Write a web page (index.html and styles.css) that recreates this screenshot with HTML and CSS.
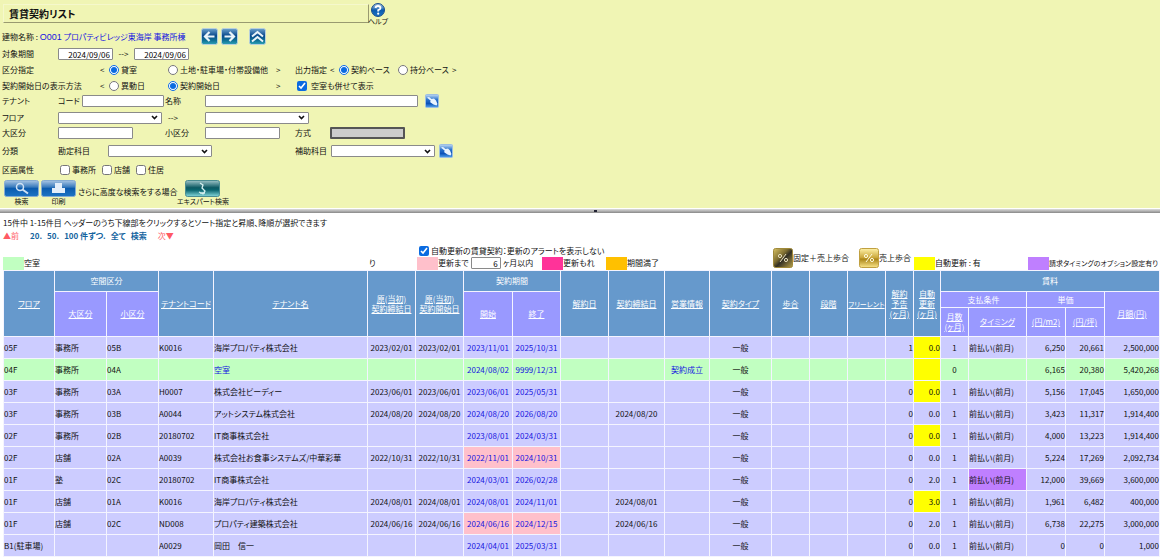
FILE: index.html
```html
<!DOCTYPE html>
<html lang="ja">
<head>
<meta charset="utf-8">
<title>賃貸契約リスト</title>
<link rel="stylesheet" href="styles.css">
</head>
<body>
<svg class="defs" width="0" height="0" aria-hidden="true">
  <defs>
    <linearGradient id="blue" x1="0" y1="0" x2="0" y2="1"><stop offset="0" stop-color="#a9c6e4"/><stop offset=".4" stop-color="#3b7cbd"/><stop offset=".5" stop-color="#0b5bae"/><stop offset="1" stop-color="#1d74c4"/></linearGradient>
    <linearGradient id="teal" x1="0" y1="0" x2="0" y2="1"><stop offset="0" stop-color="#9fc4c8"/><stop offset=".45" stop-color="#0c5963"/><stop offset=".6" stop-color="#0b6670"/><stop offset="1" stop-color="#86d8dc"/></linearGradient>
    <linearGradient id="nav" x1="0" y1="0" x2="0" y2="1"><stop offset="0" stop-color="#6fa3cf"/><stop offset=".45" stop-color="#0a4a8c"/><stop offset=".75" stop-color="#0f7296"/><stop offset="1" stop-color="#2fa3b8"/></linearGradient>
    <linearGradient id="gold" x1="0" y1="0" x2="0" y2="1"><stop offset="0" stop-color="#fff2a8"/><stop offset=".5" stop-color="#c8a436"/><stop offset=".55" stop-color="#a98416"/><stop offset="1" stop-color="#fbe68a"/></linearGradient>
    <linearGradient id="dark" x1="0" y1="0" x2="1" y2="1"><stop offset="0" stop-color="#d9c262"/><stop offset=".4" stop-color="#7b6b30"/><stop offset=".55" stop-color="#333024"/><stop offset="1" stop-color="#b9a24a"/></linearGradient>
    <linearGradient id="pick" x1="0" y1="0" x2="0" y2="1"><stop offset="0" stop-color="#c3dcf5"/><stop offset=".4" stop-color="#2a72cc"/><stop offset=".7" stop-color="#0a51b8"/><stop offset="1" stop-color="#55a5ee"/></linearGradient>
    <symbol id="hand" viewBox="0 0 14 14"><rect x=".5" y=".5" width="13" height="13" rx="1" fill="url(#pick)" stroke="#9dbfe2"/><path d="M2 3.500 4 3 6.500 5 9 4.500 11 6.500 12.500 10 11.500 11.500 8.500 10.500 5.500 8.500 5 7.500 6 7Z" fill="#e8f3ff"/></symbol>
  </defs>
</svg>

<form class="panel">
  <header class="top">
    <h1>賃貸契約リスト</h1>
    <a class="help" href="#"><svg width="14" height="14" viewBox="0 0 14 14"><circle cx="7" cy="7" r="6.500" fill="url(#blue)" stroke="#1a4d8c"/><path d="M4.500 5Q4.800 3 7 3T9.500 5Q9.500 6.300 7.200 7.200V8.500" fill="none" stroke="#fff" stroke-width="1.800"/><circle cx="7.200" cy="10.700" r="1.100" fill="#fff"/></svg><span>ヘルプ</span></a>
  </header>

  <div class="row row-building">
    <p class="building">建物名称 : <a href="#"><span class="bno">O001</span> プロパティビレッジ東海岸 事務所棟</a></p>
    <button type="button" class="icon" aria-label="前の建物"><svg width="17" height="17" viewBox="0 0 17 17"><rect x=".5" y=".5" width="16" height="16" rx="2" fill="url(#nav)" stroke="#b9d0dc"/><path d="M13.500 8.500H4.500M8.500 4 4 8.500 8.500 13" fill="none" stroke="#eaf4fa" stroke-width="2.200"/></svg></button>
    <button type="button" class="icon" aria-label="次の建物"><svg width="17" height="17" viewBox="0 0 17 17"><rect x=".5" y=".5" width="16" height="16" rx="2" fill="url(#nav)" stroke="#b9d0dc"/><path d="M3.500 8.500H12.500M8.500 4 13 8.500 8.500 13" fill="none" stroke="#eaf4fa" stroke-width="2.200"/></svg></button>
    <button type="button" class="icon icon-up" aria-label="上へ"><svg width="17" height="17" viewBox="0 0 17 17"><rect x=".5" y=".5" width="16" height="16" rx="2" fill="url(#nav)" stroke="#b9d0dc"/><path d="M3 8.500 8.500 4 14 8.500M3 13.500 8.500 9 14 13.500" fill="none" stroke="#eaf4fa" stroke-width="2"/></svg></button>
  </div>

  <div class="row">
    <label class="name" for="from">対象期間</label>
    <input id="from" class="date" type="text" value="2024/09/06"><span class="arrow">--&gt;</span><input class="date" type="text" value="2024/09/06" aria-label="対象期間の終わり">
  </div>

  <div class="row">
    <span class="name-wide">区分指定</span><span class="bracket">&lt;</span>
    <label class="opt w58"><input type="radio" name="kubun" checked>貸室</label>
    <label class="opt w108"><input type="radio" name="kubun">土地・駐車場・付帯設備他</label><span class="close">&gt;</span>
    <span class="out">出力指定</span><span class="bracket">&lt;</span>
    <label class="opt w58"><input type="radio" name="out" checked>契約ベース</label>
    <label class="opt w54"><input type="radio" name="out">持分ベース</label><span>&gt;</span>
  </div>

  <div class="row row-short">
    <span class="name-wide">契約開始日の表示方法</span><span class="bracket">&lt;</span>
    <label class="opt w58"><input type="radio" name="disp">異動日</label>
    <label class="opt w108"><input type="radio" name="disp" checked>契約開始日</label><span class="close">&gt;</span>
    <label class="opt vacant"><input type="checkbox" checked>空室も併せて表示</label>
  </div>

  <div class="row">
    <span class="name">テナント</span>
    <label class="code" for="code">コード</label><input id="code" class="w82" type="text">
    <label class="sub" for="tname">名称</label><input id="tname" class="w213" type="text">
    <button type="button" class="icon pick" aria-label="テナント選択"><svg width="14" height="14"><use href="#hand"/></svg></button>
  </div>

  <div class="row row-floor">
    <label class="name" for="floor">フロア</label>
    <select id="floor"></select><span class="arrow-wide">--&gt;</span><select aria-label="フロアの終わり"></select>
  </div>

  <div class="row row-class">
    <label class="name" for="big">大区分</label><input id="big" class="w75" type="text">
    <label class="small" for="sml">小区分</label><input id="sml" class="w75" type="text">
    <label class="method" for="method">方式</label><input id="method" class="w75 off" type="text" disabled>
  </div>

  <div class="row row-account">
    <span class="name">分類</span>
    <label class="account" for="acc">勘定科目</label><select id="acc"></select>
    <label class="assist" for="assist">補助科目</label><select id="assist"></select>
    <button type="button" class="icon pick-near" aria-label="科目選択"><svg width="14" height="14"><use href="#hand"/></svg></button>
  </div>

  <div class="row">
    <span class="name">区画属性</span>
    <label class="opt attr"><input type="checkbox">事務所</label>
    <label class="opt attr"><input type="checkbox">店舗</label>
    <label class="opt attr"><input type="checkbox">住居</label>
  </div>

  <div class="actions">
    <button type="submit" class="act"><svg width="35" height="17" viewBox="0 0 35 17"><rect x=".5" y=".5" width="34" height="16" rx="2" fill="url(#blue)" stroke="#86acd2"/><circle cx="16" cy="7" r="3.500" fill="none" stroke="#cfe2f5" stroke-width="1.500"/><path d="M18.500 9.500 24 13.500" stroke="#cfe2f5" stroke-width="2"/></svg><span>検索</span></button>
    <button type="button" class="act"><svg width="35" height="17" viewBox="0 0 35 17"><rect x=".5" y=".5" width="34" height="16" rx="2" fill="url(#blue)" stroke="#86acd2"/><path d="M14 3H21V8H24V13H11V8H14Z" fill="#e3eefa"/></svg><span>印刷</span></button>
    <span class="more">さらに高度な検索をする場合</span>
    <button type="button" class="act expert"><svg width="35" height="17" viewBox="0 0 35 17"><rect x=".5" y=".5" width="34" height="16" rx="2" fill="url(#teal)" stroke="#4b8d92"/><path d="M15 3 18 5 17 8 20 11 18 14 14 12M15 13H20" stroke="#d5f0f0" stroke-width="1.300" fill="none"/></svg><span>エキスパート検索</span></button>
  </div>
</form>
<div class="splitter"><i></i></div>

<main>
  <p class="count">15件中 1-15件目 ヘッダーのうち下線部をクリックするとソート指定と昇順、降順が選択できます</p>
  <nav class="pager"><a class="red" href="#">▲前</a><span class="sizes"><span><a href="#">20</a>.</span><span><a href="#">50</a>.</span><span><a href="#">100</a> 件ずつ.</span><a href="#">全て</a><span>検索</span></span><a class="red" href="#">次▼</a></nav>

  <div class="legend">
    <span class="key k-vacant"><i class="green"></i>空室</span>
    <span class="key k-tail">り</span>
    <div class="alerts">
      <label class="opt"><input type="checkbox" checked>自動更新の賃貸契約：更新のアラートを表示しない</label>
      <div class="alert-keys">
        <label class="key k-until"><i class="pink"></i>更新まで<input type="text" value="6">ヶ月以内</label>
        <span class="key k-miss"><i class="magenta"></i>更新もれ</span>
        <span class="key"><i class="orange"></i>期間満了</span>
      </div>
    </div>
    <span class="key k-pct"><svg width="20" height="20" viewBox="0 0 20 20"><rect x=".5" y=".5" width="19" height="19" rx="2" fill="url(#dark)" stroke="#a08a3a"/><path d="M13 6 7 14" stroke="#e8e0c0"/><circle cx="7" cy="8" r="1.600" fill="none" stroke="#e8e0c0"/><circle cx="13" cy="12" r="1.600" fill="none" stroke="#e8e0c0"/></svg>固定＋売上歩合</span>
    <span class="key k-pct2"><svg width="20" height="20" viewBox="0 0 20 20"><rect x=".5" y=".5" width="19" height="19" rx="2" fill="url(#gold)" stroke="#c0a040"/><path d="M13 6 7 14" stroke="#fffbe0"/><circle cx="7" cy="8" r="1.600" fill="none" stroke="#fffbe0"/><circle cx="13" cy="12" r="1.600" fill="none" stroke="#fffbe0"/></svg>売上歩合</span>
    <span class="key k-auto"><i class="yellow"></i>自動更新 : 有</span>
    <span class="key tight"><i class="violet"></i>請求タイミングのオプション設定有り</span>
  </div>

  <table>
    <colgroup><col class="c51"><col class="c52"><col class="c52"><col class="c55"><col><col class="c48"><col class="c48"><col class="c49"><col class="c48"><col class="c48"><col class="c56"><col class="c45"><col class="c62"><col class="c38"><col class="c38"><col class="c38"><col class="c28"><col class="c27"><col class="c28"><col class="c58"><col class="c39"><col class="c39"><col class="c55"></colgroup>
    <thead>
      <tr class="h1"><th rowspan="3"><a href="#">フロア</a></th><th colspan="2">空間区分</th><th rowspan="3"><a href="#">テナントコード</a></th><th rowspan="3"><a href="#">テナント名</a></th><th rowspan="3"><a href="#">原(当初)<br>契約締結日</a></th><th rowspan="3"><a href="#">原(当初)<br>契約開始日</a></th><th colspan="2">契約期間</th><th rowspan="3"><a href="#">解約日</a></th><th rowspan="3"><a href="#">契約締結日</a></th><th rowspan="3"><a href="#">営業情報</a></th><th rowspan="3"><a href="#">契約タイプ</a></th><th rowspan="3"><a href="#">歩合</a></th><th rowspan="3"><a href="#">段階</a></th><th rowspan="3" class="tight"><a href="#">フリーレント</a></th><th rowspan="3"><a href="#">解約<br>予告<br>(ヶ月)</a></th><th rowspan="3"><a href="#">自動<br>更新<br>(ヶ月)</a></th><th colspan="5">賃料</th></tr>
      <tr class="h2"><th rowspan="2"><a href="#">大区分</a></th><th rowspan="2"><a href="#">小区分</a></th><th rowspan="2"><a href="#">開始</a></th><th rowspan="2"><a href="#">終了</a></th><th colspan="2">支払条件</th><th colspan="2">単価</th><th rowspan="2"><a href="#">月額(円)</a></th></tr>
      <tr class="h3"><th><a href="#">月数<br>(ヶ月)</a></th><th><a href="#">タイミング</a></th><th><a href="#">(円/m2)</a></th><th><a href="#">(円/坪)</a></th></tr>
    </thead>
    <tbody>
      <tr><td>05F<td>事務所<td>05B<td>K0016<td>海岸プロパティ株式会社<td class="c">2023/02/01<td class="c">2023/02/01<td class="c b">2023/11/01<td class="c b">2025/10/31<td><td><td><td class="c">一般<td><td><td><td class="r">1<td class="r yellow">0.0<td class="c">1<td>前払い(前月)<td class="r">6,250<td class="r">20,661<td class="r">2,500,000</tr>
      <tr class="green"><td>04F<td>事務所<td>04A<td><td class="b">空室<td><td><td class="c b">2024/08/02<td class="c b">9999/12/31<td><td><td class="c b">契約成立<td class="c">一般<td><td><td><td><td class="yellow"><td class="c">0<td><td class="r">6,165<td class="r">20,380<td class="r">5,420,268</tr>
      <tr><td>03F<td>事務所<td>03A<td>H0007<td>株式会社ビーディー<td class="c">2023/06/01<td class="c">2023/06/01<td class="c b">2023/06/01<td class="c b">2025/05/31<td><td><td><td class="c">一般<td><td><td><td class="r">0<td class="r yellow">0.0<td class="c">1<td>前払い(前月)<td class="r">5,156<td class="r">17,045<td class="r">1,650,000</tr>
      <tr><td>03F<td>事務所<td>03B<td>A0044<td>アットシステム株式会社<td class="c">2024/08/20<td class="c">2024/08/20<td class="c b">2024/08/20<td class="c b">2026/08/20<td><td class="c">2024/08/20<td><td class="c">一般<td><td><td><td class="r">0<td class="r">0.0<td class="c">1<td>前払い(前月)<td class="r">3,423<td class="r">11,317<td class="r">1,914,400</tr>
      <tr><td>02F<td>事務所<td>02B<td>20180702<td>IT商事株式会社<td><td><td class="c b">2023/08/01<td class="c b">2024/03/31<td><td><td><td class="c">一般<td><td><td><td class="r">0<td class="r yellow">0.0<td class="c">1<td>前払い(前月)<td class="r">4,000<td class="r">13,223<td class="r">1,914,400</tr>
      <tr><td>02F<td>店舗<td>02A<td>A0039<td>株式会社お食事システムズ/中華彩華<td class="c">2022/10/31<td class="c">2022/10/31<td class="c b pink">2022/11/01<td class="c b pink">2024/10/31<td><td><td><td class="c">一般<td><td><td><td class="r">0<td class="r">0.0<td class="c">1<td>前払い(前月)<td class="r">5,224<td class="r">17,269<td class="r">2,092,734</tr>
      <tr><td>01F<td>塾<td>02C<td>20180702<td>IT商事株式会社<td><td><td class="c b">2024/03/01<td class="c b">2026/02/28<td><td><td><td class="c">一般<td><td><td><td class="r">0<td class="r">2.0<td class="c">1<td class="violet">前払い(前月)<td class="r">12,000<td class="r">39,669<td class="r">3,600,000</tr>
      <tr><td>01F<td>店舗<td>01A<td>K0016<td>海岸プロパティ株式会社<td class="c">2024/08/01<td class="c">2024/08/01<td class="c b">2024/08/01<td class="c b">2024/11/01<td><td class="c">2024/08/01<td><td class="c">一般<td><td><td><td class="r">0<td class="r yellow">3.0<td class="c">1<td>前払い(前月)<td class="r">1,961<td class="r">6,482<td class="r">400,000</tr>
      <tr><td>01F<td>店舗<td>02C<td>ND008<td>プロパティ建築株式会社<td class="c">2024/06/16<td class="c">2024/06/16<td class="c b pink">2024/06/16<td class="c b pink">2024/12/15<td><td class="c">2024/06/16<td><td class="c">一般<td><td><td><td class="r">0<td class="r">2.0<td class="c">1<td>前払い(前月)<td class="r">6,738<td class="r">22,275<td class="r">3,000,000</tr>
      <tr><td>B1(駐車場)<td><td><td>A0029<td>岡田　信一<td><td><td class="c b">2024/04/01<td class="c b">2025/03/31<td><td><td><td class="c">一般<td><td><td><td class="r">0<td class="r">0.0<td class="c">1<td>前払い(前月)<td class="r">0<td class="r">0<td class="r">1,000</tr>
    </tbody>
  </table>
</main>
</body>
</html>
```
FILE: styles.css
```css
* { box-sizing: border-box; }
body {
  margin: 0;
  background: #fff;
  color: #111;
  font: 8px/10px "Noto Sans CJK JP", sans-serif;
  font-feature-settings: "palt";
  white-space: nowrap;
  overflow-x: hidden;
}
h1, p { margin: 0; }
.defs { position: absolute; }
svg { display: block; flex: none; }
a { color: inherit; }
input, select, button { font: inherit; font-feature-settings: inherit; margin: 0; }
button { border: 0; padding: 0; background: none; color: inherit; }
input[type="text"], select {
  height: 12px;
  padding: 0 2px;
  border: 1px solid #8a8a8a;
  border-radius: 1px;
  background: #fff;
}
select {
  width: 104px;
  appearance: none;
  background-image: url("data:image/svg+xml,%3Csvg xmlns='http://www.w3.org/2000/svg' width='7' height='5'%3E%3Cpath d='M1 1l2.500 2.500L6 1' fill='none' stroke='%23111' stroke-width='1.600'/%3E%3C/svg%3E");
  background-repeat: no-repeat;
  background-position: right 3px center;
}

/* search panel */
.panel { padding: 3px 0 0 2px; background: #f0f5b4; }
.top { display: flex; height: 24px; }
h1 {
  width: 366px;
  height: 19px;
  margin: 1px 1px 0 1px;
  padding: 0 5px;
  border: 1px solid #f5f8cc;
  border-right-color: #999a70;
  border-bottom-color: #999a70;
  font-size: 10px;
  line-height: 18px;
  font-weight: 700;
}
.help { display: flex; flex-direction: column; align-items: center; width: 16px; font-size: 7px; line-height: 9px; text-decoration: none; }
.row { display: flex; align-items: center; height: 16px; }
.row-building { height: 19px; }
.row-short { height: 15px; }
.building { width: 199px; }
.building a { color: #1414e0; text-decoration: none; }
.bno { font-family: "Liberation Sans", sans-serif; font-size: 9px; }
.icon { margin-right: 3px; }
.icon-up { margin-left: 8px; }
.row-floor { height: 17px; }
.row-class { height: 14px; }
.row-account { height: 22px; }
.name { width: 56px; }
.name-wide { width: 98px; }
.bracket { width: 9px; }
.close { width: 19px; }
.out { width: 35px; }
.date { width: 55px; text-align: right; }
.arrow { width: 21px; text-align: center; }
.arrow-wide { width: 43px; padding-left: 6px; }
.opt { display: flex; align-items: center; gap: 2px; }
.opt input { width: 10px; height: 10px; accent-color: #0b6be0; }
.w54 { width: 54px; }
.w58 { width: 59px; }
.w75 { width: 75px; }
.w82 { width: 82px; }
.w108 { width: 108px; }
.w213 { width: 213px; }
.vacant { gap: 4px; padding-left: 2px; }
.code { width: 24px; }
.sub { width: 41px; padding-left: 1px; }
.small { width: 72px; padding-left: 32px; }
.method { width: 50px; padding-left: 15px; }
.panel .off { border: 2px solid #555; background: #ccc; }
.account { width: 50px; }
.assist { width: 119px; padding-left: 83px; }
.pick { margin-left: 7px; }
.pick-near { margin-left: 4px; }
.attr { margin: 0 4px 0 2px; }
.actions { display: flex; align-items: flex-start; padding: 2px 0 2px 2px; gap: 2px; }
.act { display: flex; flex-direction: column; align-items: center; width: 35px; font-size: 7px; line-height: 9px; }
.more { padding-top: 7px; }
.expert { width: 47px; }
.splitter {
  display: flex;
  justify-content: center;
  height: 5px;
  padding: 1px 0 0 31px;
  border-top: 1px solid #fff;
  background: linear-gradient(#ddd, #888);
}
.splitter i { width: 3px; height: 2px; background: #223; }

/* list */
main { padding: 5px 0 0 3px; }
.pager { display: flex; gap: 11px; padding-top: 3px; color: #1464a0; font-weight: 700; }
.pager .sizes { display: flex; gap: 5px; }
.pager a { text-decoration: none; }
.pager .red { color: #ff5a64; font-weight: 400; }
.legend { display: flex; align-items: flex-end; height: 29px; padding-bottom: 1px; }
.key { display: flex; align-items: center; flex: none; height: 12px; }
.key i { width: 21px; height: 13px; flex: none; }
.k-vacant { width: 366px; }
.k-tail { width: 48px; }
.alerts { flex: none; width: 356px; }
.alerts > .opt { height: 13px; padding-left: 2px; }
.alert-keys { display: flex; height: 12px; }
.k-until { width: 125px; }
.key input[type="text"] { width: 30px; margin: 0 2px; text-align: right; }
.k-miss { width: 64px; }
.k-pct { width: 86px; height: 22px; }
.k-pct2 { width: 55px; height: 22px; }
.k-auto { width: 114px; }
.green { background: #c1ffc1; }
.pink { background: #ffc0cb; }
.magenta { background: #ff3399; }
.orange { background: #ffc000; }
.yellow { background: #ff0; }
.violet { background: #bf7fff; }

table { width: 100%; table-layout: fixed; border-collapse: collapse; }
th, td { border: 1px solid #f4f4ff; padding: 0; }
th { background: #69c; color: #fff; font-weight: 400; line-height: 10px; }
.tight { font-size: 7px; }
.h1 { height: 21px; }
.h2 { height: 16px; }
.h3 { height: 29px; }
.h2 th, .h3 th { background: #99f; }
tbody tr { height: 22px; background: #ccf; }
tbody .green { background: #c1ffc1; }
.c { text-align: center; }
.r { text-align: right; }
.b { color: #1414e0; }
.c27 { width: 27px; }
.c28 { width: 28px; }
.c38 { width: 38px; }
.c39 { width: 39px; }
.c45 { width: 45px; }
.c48 { width: 48px; }
.c49 { width: 49px; }
.c51 { width: 51px; }
.c52 { width: 52px; }
.c55 { width: 55px; }
.c56 { width: 56px; }
.c58 { width: 58px; }
.c62 { width: 62px; }
```
